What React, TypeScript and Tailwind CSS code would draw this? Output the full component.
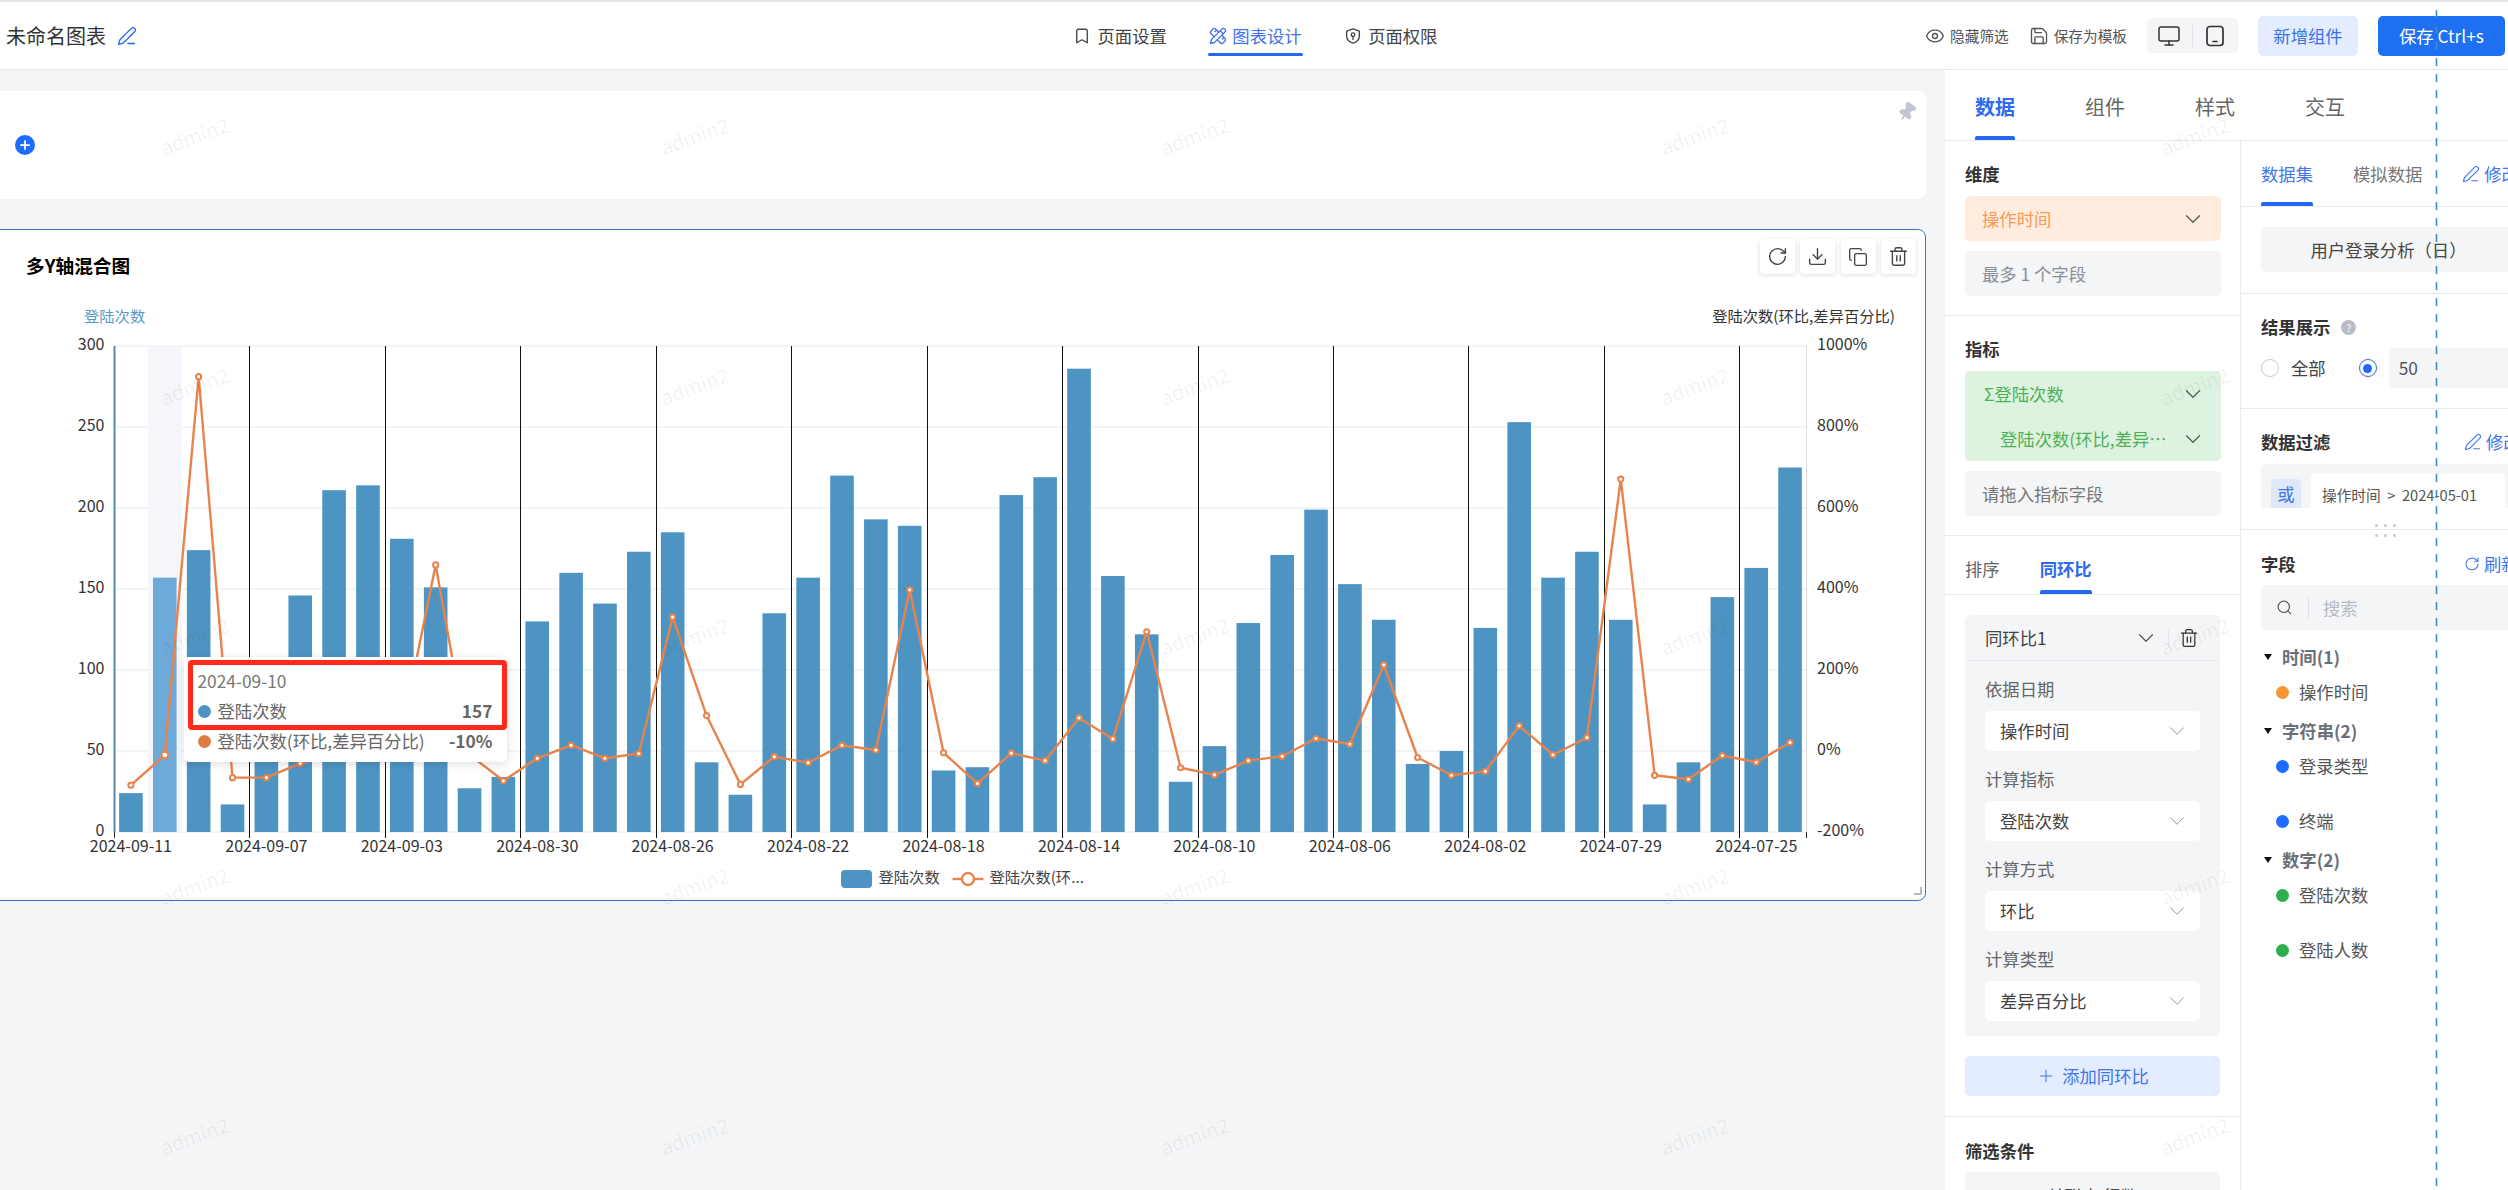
import React from "react";
import {
  Bookmark, PencilRuler, Eye, Save, Monitor, Plus, Pin,
  RotateCw, Download, Copy, Trash2, ChevronDown, PenLine, Search,
} from "lucide-react";

const BARS = [24,157,174,17,60,146,211,214,181,151,27,34,130,160,141,173,185,43,23,135,157,220,193,189,38,40,208,219,286,158,122,31,53,129,171,199,153,131,42,50,126,253,157,173,131,17,43,145,163,225];
const LINE_Z = [1227,1151,194,1208,1208,1172,1150,1120,1090,670,1150,1216,1159,1126,1159,1147,802,1051,1225,1155,1170,1126,1138,733,1145,1223,1146,1165,1057,1110,839,1183,1201,1165,1154,1109,1123,923,1157,1202,1192,1077,1150,1107,453,1202,1212,1152,1169,1119];
const X0 = 114;
const BAND = 33.86;
const TOP = 346;
const BOTTOM = 832;
const XL = ["2024-09-11","2024-09-07","2024-09-03","2024-08-30","2024-08-26","2024-08-22","2024-08-18","2024-08-14","2024-08-10","2024-08-06","2024-08-02","2024-07-29","2024-07-25"];
const cx = (i: number) => X0 + BAND * (i + 0.5);
const ly = (z: number) => 300 + z / 2.529;

function Chart() {
  const pts = LINE_Z.map((z, i) => `${cx(i)},${ly(z)}`).join(" ");
  return (
    <svg width="1926" height="600" viewBox="0 300 1926 600" className="block">
      {[0, 1, 2, 3, 4, 5, 6].map((i) => (
        <line key={i} x1={X0} x2={1807} y1={TOP + 81 * i} y2={TOP + 81 * i} stroke="#eff0f3" strokeWidth="1.5" />
      ))}
      <rect x={X0 + BAND} y={TOP} width={BAND} height={BOTTOM - TOP} fill="#f4f6fb" />
      {BARS.map((v, i) => {
        const h = (v * (BOTTOM - TOP)) / 300;
        return <rect key={i} x={cx(i) - 11.8} y={BOTTOM - h} width={23.6} height={h} fill={i === 1 ? "#6eaad9" : "#4e94c3"} />;
      })}
      {Array.from({ length: 13 }).map((_, k) => {
        if (k === 0) return null;
        const x = Math.round(X0 + BAND * 4 * k) + 0.5;
        return <line key={k} x1={x} x2={x} y1={TOP} y2={838} stroke="#111" strokeWidth="1" />;
      })}
      <line x1={114.5} x2={114.5} y1={TOP} y2={BOTTOM} stroke="#5a89a8" strokeWidth="2" />
      <line x1={114.5} x2={114.5} y1={BOTTOM} y2={838} stroke="#222" strokeWidth="1" />
      <line x1={1806.5} x2={1806.5} y1={TOP} y2={BOTTOM} stroke="#d8dade" strokeWidth="1" />
      <line x1={1806.5} x2={1806.5} y1={BOTTOM} y2={838} stroke="#222" strokeWidth="1" />
      <polyline points={pts} fill="none" stroke="#e8834c" strokeWidth="2.4" strokeLinejoin="round" />
      {LINE_Z.map((z, i) => (
        <circle key={i} cx={cx(i)} cy={ly(z)} r={i === 1 ? 3.4 : 2.6} fill="#fff" stroke="#e8834c" strokeWidth="2" />
      ))}
      <g fontSize="16" fill="#333">
        {["300","250","200","150","100","50","0"].map((t, i) => (
          <text key={t} x="104.5" y={TOP + 81 * i} textAnchor="end" dominantBaseline="middle">{t}</text>
        ))}
        {["1000%","800%","600%","400%","200%","0%","-200%"].map((t, i) => (
          <text key={t} x="1817" y={TOP + 81 * i} dominantBaseline="middle">{t}</text>
        ))}
        {XL.map((t, k) => (
          <text key={t} x={cx(k * 4)} y="848" textAnchor="middle" dominantBaseline="middle">{t}</text>
        ))}
      </g>
      <text x="84" y="318" fontSize="15.3" fill="#5a9bc6" dominantBaseline="middle">登陆次数</text>
      <text x="1895" y="318" fontSize="15.3" fill="#333" textAnchor="end" dominantBaseline="middle">登陆次数(环比,差异百分比)</text>
      <rect x="841" y="870" width="31" height="18" rx="4" fill="#4e94c3" />
      <text x="878.5" y="879" fontSize="15.3" fill="#444" dominantBaseline="middle">登陆次数</text>
      <line x1="952.5" x2="983.5" y1="879" y2="879" stroke="#e8834c" strokeWidth="2.4" />
      <circle cx="968" cy="879" r="6" fill="#fff" stroke="#e8834c" strokeWidth="2.4" />
      <text x="989.5" y="879" fontSize="15.3" fill="#444" dominantBaseline="middle">登陆次数(环...</text>
    </svg>
  );
}

function Tooltip() {
  return (
    <div className="absolute left-[183.5px] top-[357px] w-[323px] h-[105px] bg-white rounded-[5px] shadow-[0_2px_8px_rgba(0,0,0,0.14)] pl-[14px] pr-[14px] pt-[12px] text-[17.33px] leading-[24px] text-[#666]">
      <div className="text-[#777]">2024-09-10</div>
      <div className="flex items-center mt-[6px]">
        <span className="w-[13px] h-[13px] rounded-full bg-[#4e94c3] mr-[7px]" />
        <span>登陆次数</span>
        <span className="ml-auto font-bold">157</span>
      </div>
      <div className="flex items-center mt-[6px]">
        <span className="w-[13px] h-[13px] rounded-full bg-[#e07b48] mr-[7px]" />
        <span className="whitespace-nowrap">登陆次数(环比,差异百分比)</span>
        <span className="ml-auto font-bold">-10%</span>
      </div>
      <div className="absolute left-[4.5px] top-[3px] right-0 h-[70px] border-[5px] border-[#ff2a1a] rounded-[4px]" />
    </div>
  );
}

function ActionBtn({ children }: { children: React.ReactNode }) {
  return (
    <div className="w-[35px] h-[35px] flex items-center justify-center bg-white rounded-[4px] shadow-[0_1px_5px_rgba(0,0,0,0.13)] text-[#444]">
      {children}
    </div>
  );
}

function ShieldKey() {
  return (
    <svg width="18" height="18" viewBox="0 0 24 24" fill="none" stroke="currentColor" strokeWidth="1.8" strokeLinecap="round" strokeLinejoin="round">
      <path d="M12 2.5 3.5 5.5V12c0 4.8 3.6 8 8.5 9.5 4.9-1.5 8.5-4.7 8.5-9.5V5.5z" />
      <circle cx="12" cy="10.3" r="2.4" />
      <path d="M12 12.7V16.5" />
    </svg>
  );
}

function TabletIcon() {
  return (
    <svg width="22" height="22" viewBox="0 0 22 22" fill="none" stroke="currentColor" strokeWidth="1.7" strokeLinecap="round">
      <rect x="3" y="1.5" width="16" height="19" rx="3" />
      <path d="M9 16.5h4" />
    </svg>
  );
}

function Header() {
  return (
    <div className="flex h-[70px] border-t-2 border-b border-t-[#e3e4e7] border-b-[#e8eaee] bg-white shrink-0">
      <div className="w-[1073px] pl-[6px] pt-[20px] flex items-start text-[20px] leading-[28px] text-[#333]">
        <span>未命名图表</span>
        <PenLine size={20} strokeWidth={1.6} className="ml-[11px] mt-[4px] text-[#2468f2]" />
      </div>
      <div className="flex gap-[41px] text-[17.33px] leading-[24px] text-[#444]">
        <div className="flex flex-col pt-[22px]">
          <div className="flex items-center gap-[6.5px]"><Bookmark size={18} strokeWidth={1.8} /><span>页面设置</span></div>
        </div>
        <div className="flex flex-col pt-[22px] text-[#3f74ea]">
          <div className="flex items-center gap-[5px] px-[1.5px]"><PencilRuler size={18} strokeWidth={1.8} /><span>图表设计</span></div>
          <div className="mt-[5px] h-[3px] rounded-[2px] bg-[#2468f2]" />
        </div>
        <div className="flex flex-col pt-[22px]">
          <div className="flex items-center gap-[6px]"><ShieldKey /><span>页面权限</span></div>
        </div>
      </div>
      <div className="ml-auto pr-[3px] flex items-start pt-[14px] text-[14.67px] text-[#555]">
        <div className="flex items-center h-[40px] gap-[5px]"><Eye size={20} strokeWidth={1.6} /><span>隐藏筛选</span></div>
        <div className="flex items-center h-[40px] gap-[4.5px] ml-[20.5px]"><Save size={20} strokeWidth={1.6} /><span>保存为模板</span></div>
        <div className="ml-[20px] mt-[2px] w-[91px] h-[35px] rounded-[5px] bg-[#f4f5f7] flex items-center justify-between pl-[10px] pr-[12px] text-[#333]">
          <Monitor size={24} strokeWidth={1.5} />
          <span className="w-px h-[22px] bg-[#dfe1e6]" />
          <TabletIcon />
        </div>
        <div className="ml-[20px] w-[100px] h-[40px] rounded-[5px] bg-[#e3edff] text-[#3b72e8] text-[17.33px] flex items-center justify-center">新增组件</div>
        <div className="ml-[20px] w-[127px] h-[40px] rounded-[5px] bg-[#1f6ff2] text-white text-[17.33px] flex items-center justify-center">保存 Ctrl+s</div>
      </div>
    </div>
  );
}

function Canvas() {
  return (
    <div className="w-[1945px] shrink-0 bg-[#f4f5f7] pt-[21px] pr-[19px] overflow-hidden">
      <div className="relative h-[108px] -ml-[20px] bg-white rounded-[8px] flex items-center pl-[35px]">
        <span className="w-[20px] h-[20px] rounded-full bg-[#1f6bff] flex items-center justify-center text-white">
          <Plus size={14} strokeWidth={3} />
        </span>
        <Pin size={20} fill="#c2c6d2" className="absolute right-[9px] top-[11px] rotate-[35deg] text-[#c2c6d2]" />
      </div>
      <div className="relative mt-[30px] -ml-[10px] h-[672px] bg-white rounded-[8px] border border-[#3a78c4]">
        <div className="flex justify-between h-[70px]">
          <div className="pl-[35px] mt-[22px] h-[26px] text-[18.67px] leading-[26px] font-bold text-black">多Y轴混合图</div>
          <div className="flex gap-[5.5px] pr-[9px] pt-[9px] items-start">
            <ActionBtn><RotateCw size={21} strokeWidth={1.6} /></ActionBtn>
            <ActionBtn><Download size={21} strokeWidth={1.6} /></ActionBtn>
            <ActionBtn><Copy size={20} strokeWidth={1.6} /></ActionBtn>
            <ActionBtn><Trash2 size={21} strokeWidth={1.6} /></ActionBtn>
          </div>
        </div>
        <div className="relative ml-[9px]">
          <Chart />
          <Tooltip />
        </div>
        <div className="absolute right-[3px] bottom-[5px] w-[8px] h-[8px] border-r-2 border-b-2 border-[#b5b8bf]" />
      </div>
    </div>
  );
}

function Label({ children }: { children: React.ReactNode }) {
  return <div className="text-[17.33px] leading-[24px] font-bold text-[#333] whitespace-nowrap">{children}</div>;
}

function CompareField({ label, value }: { label: string; value: string }) {
  return (
    <div className="mt-[16px]">
      <div className="text-[17.33px] leading-[24px] text-[#666]">{label}</div>
      <div className="mt-[10px] w-[215px] h-[40px] bg-white rounded-[5px] flex items-center justify-between pl-[15px] pr-[10px] text-[17.33px] text-[#444]">
        <span>{value}</span>
        <ChevronDown size={26} strokeWidth={0.8} className="text-[#888]" />
      </div>
    </div>
  );
}

function ColumnA() {
  return (
    <div className="w-[296px] shrink-0 border-r border-[#e8eaee] text-[17.33px]">
      <div className="pl-[20px] pr-[19px] pt-[21px] pb-[19px] border-b border-[#e8eaee]">
        <Label>维度</Label>
        <div className="mt-[10px] h-[45px] rounded-[5px] bg-[#ffecdf] text-[#f79a55] flex items-center justify-between pl-[17px] pr-[15px]">
          <span>操作时间</span><ChevronDown size={26} strokeWidth={1.1} className="text-[#555]" />
        </div>
        <div className="mt-[10px] h-[45px] rounded-[5px] bg-[#f4f5f7] text-[#8a8f98] flex items-center pl-[17px]">最多 1 个字段</div>
      </div>
      <div className="pl-[20px] pr-[19px] pt-[21px] pb-[19px] border-b border-[#e8eaee]">
        <Label>指标</Label>
        <div className="mt-[10px] h-[90px] rounded-[5px] bg-[#def3df] text-[#4cb05a]">
          <div className="h-[45px] flex items-center justify-between pl-[19px] pr-[15px]">
            <span>Σ登陆次数</span><ChevronDown size={26} strokeWidth={1.1} className="text-[#555]" />
          </div>
          <div className="h-[45px] flex items-center justify-between pl-[35px] pr-[15px]">
            <span>登陆次数(环比,差异…</span><ChevronDown size={26} strokeWidth={1.1} className="text-[#555]" />
          </div>
        </div>
        <div className="mt-[10px] h-[45px] rounded-[5px] bg-[#f4f5f7] text-[#777] flex items-center pl-[17px]">请拖入指标字段</div>
      </div>
      <div className="pl-[20px] flex gap-[40px] pt-[21px] border-b border-[#e8eaee]">
        <div className="text-[#666] leading-[24px]">排序</div>
        <div className="flex flex-col">
          <span className="leading-[24px] font-semibold text-[#2f6bec]">同环比</span>
          <span className="mt-[9px] h-[4px] rounded-t-[2px] bg-[#2468f2]" />
        </div>
      </div>
      <div className="pl-[20px] pr-[20px] pb-[20px] border-b border-[#e8eaee]">
        <div className="mt-[20px] w-[255px] rounded-[6px] bg-[#f4f5f7] pb-[15px]">
          <div className="h-[46px] border-b border-[#e8eaee] flex items-center pl-[20px] pr-[21px] text-[#444]">
            <span>同环比1</span>
            <ChevronDown size={26} strokeWidth={1.1} className="ml-auto text-[#555]" />
            <span className="w-px h-[20px] bg-[#e6e8ec] ml-[9px] mr-[10px]" />
            <Trash2 size={20} strokeWidth={1.5} className="text-[#333]" />
          </div>
          <div className="pl-[20px]">
            <CompareField label="依据日期" value="操作时间" />
            <CompareField label="计算指标" value="登陆次数" />
            <CompareField label="计算方式" value="环比" />
            <CompareField label="计算类型" value="差异百分比" />
          </div>
        </div>
        <div className="mt-[20px] w-[255px] h-[40px] rounded-[5px] bg-[#e3edff] text-[#3f74ea] flex items-center justify-center gap-[6px]">
          <Plus size={20} strokeWidth={1.2} /><span>添加同环比</span>
        </div>
      </div>
      <div className="pl-[20px] pr-[20px] pt-[22px]">
        <Label>筛选条件</Label>
        <div className="mt-[9px] w-[255px] h-[60px] rounded-[6px] bg-[#f4f5f7] text-center text-[#444] pt-[12px] leading-[24px]">关联表 行数</div>
      </div>
    </div>
  );
}

function EditLink({ icon, text }: { icon: React.ReactNode; text: string }) {
  return (
    <span className="flex items-center gap-[4px] text-[#3f74ea] whitespace-nowrap font-normal leading-[24px]">{icon}<span>{text}</span></span>
  );
}

function Group({ text }: { text: string }) {
  return (
    <div className="flex items-center h-[24px] mt-[15px] font-semibold text-[#6b7078]">
      <svg width="8" height="6" viewBox="0 0 8 6" className="ml-[3px] mr-[10px]"><path d="M0 0h8L4 6z" fill="#111" /></svg>
      <span>{text}</span>
    </div>
  );
}

function Field({ color, text, top }: { color: string; text: string; top: string }) {
  return (
    <div className={`flex items-center h-[24px] pl-[15px] text-[#555] ${top}`}>
      <span className="w-[13px] h-[13px] rounded-full mr-[10px]" style={{ background: color }} />
      <span>{text}</span>
    </div>
  );
}

function ColumnB() {
  const pen = <PenLine size={18} strokeWidth={1.5} className="shrink-0" />;
  return (
    <div className="relative w-[295px] shrink-0 text-[17.33px]">
      <div className="pl-[20px] flex gap-[40px] pt-[21px] border-b border-[#e8eaee] whitespace-nowrap">
        <div className="flex flex-col">
          <span className="leading-[24px] text-[#3f74ea]">数据集</span>
          <span className="mt-[16px] h-[4px] rounded-t-[2px] bg-[#2468f2]" />
        </div>
        <span className="leading-[24px] text-[#777]">模拟数据</span>
        <div className="h-[24px]"><EditLink icon={pen} text="修改" /></div>
      </div>
      <div className="pl-[20px] pt-[20px] pb-[21px] border-b border-[#e8eaee]">
        <div className="h-[45px] w-[255px] rounded-[5px] bg-[#f4f5f7] flex items-center justify-center text-[#444] whitespace-nowrap">用户登录分析（日）</div>
      </div>
      <div className="pl-[20px] pt-[21px] pb-[20px] border-b border-[#e8eaee]">
        <div className="flex items-center">
          <Label>结果展示</Label>
          <span className="ml-[11px] w-[15px] h-[15px] rounded-full bg-[#b8bcc8] text-white text-[10px] flex items-center justify-center">?</span>
        </div>
        <div className="mt-[9px] flex items-center h-[40px]">
          <span className="shrink-0 w-[18px] h-[18px] rounded-full border border-[#c4c7cf] bg-white" />
          <span className="ml-[12px] text-[#444] whitespace-nowrap">全部</span>
          <span className="shrink-0 ml-[33px] w-[18px] h-[18px] rounded-full border border-[#2468f2] flex items-center justify-center">
            <span className="w-[9px] h-[9px] rounded-full bg-[#2468f2]" />
          </span>
          <div className="shrink-0 ml-[12px] w-[150px] h-[40px] rounded-[5px] bg-[#f4f5f7] pl-[10px] flex items-center text-[#555]">50</div>
        </div>
      </div>
      <div className="pl-[20px] pt-[21px] pb-[21px] border-b border-[#e8eaee]">
        <div className="flex items-center justify-between w-[247px]">
          <Label>数据过滤</Label>
          <div className="w-[44px]"><EditLink icon={pen} text="修改" /></div>
        </div>
        <div className="mt-[10px] h-[44px] w-[275px] rounded-t-[5px] bg-[#f4f5f7] flex items-end pl-[10px] overflow-hidden">
          <div className="w-[30px] h-[29px] rounded-t-[4px] bg-[#dfe9fb] text-[#3f74ea] flex items-center justify-center">或</div>
          <div className="ml-[10px] w-[194px] h-[34px] bg-white rounded-t-[4px] pl-[11px] pt-[9px] text-[14.67px] leading-[24px] text-[#555] whitespace-nowrap">操作时间&nbsp;&nbsp;&gt;&nbsp;&nbsp;2024-05-01</div>
        </div>
      </div>
      <div className="pl-[20px] pt-[22px]">
        <div className="flex items-center justify-between w-[247px]">
          <Label>字段</Label>
          <div className="w-[44px]"><EditLink icon={<RotateCw size={16} strokeWidth={1.6} className="shrink-0" />} text="刷新" /></div>
        </div>
        <div className="mt-[9px] h-[45px] w-[275px] rounded-[5px] bg-[#f4f5f7] flex items-center pl-[15px] text-[#b5b9c3]">
          <Search size={17} strokeWidth={1.6} className="text-[#555]" />
          <span className="ml-[15px] w-px h-[20px] bg-[#dfe1e6]" />
          <span className="ml-[14px]">搜索</span>
        </div>
        <Group text="时间(1)" />
        <Field color="#f79537" text="操作时间" top="mt-[11px]" />
        <Group text="字符串(2)" />
        <Field color="#1f6bff" text="登录类型" top="mt-[11px]" />
        <Field color="#1f6bff" text="终端" top="mt-[31px]" />
        <Group text="数字(2)" />
        <Field color="#2eaf4d" text="登陆次数" top="mt-[11px]" />
        <Field color="#2eaf4d" text="登陆人数" top="mt-[31px]" />
      </div>
      <div className="absolute left-[134px] top-[383px] grid grid-cols-3 gap-x-[6px] gap-y-[7px]">
        {[0, 1, 2, 3, 4, 5].map((i) => (
          <span key={i} className="w-[3px] h-[3px] rounded-full bg-[#c5c9d3]" />
        ))}
      </div>
    </div>
  );
}

function Panel() {
  return (
    <div className="w-[563px] shrink-0 bg-white overflow-hidden">
      <div className="h-[71px] pl-[30px] flex gap-[70px] border-b border-[#e8eaee] text-[20px] text-[#666]">
        <div className="flex flex-col pt-[23px]">
          <span className="leading-[28px] font-semibold text-[#2f6bec]">数据</span>
          <span className="mt-[15px] h-[4px] rounded-t-[2px] bg-[#2468f2]" />
        </div>
        <span className="pt-[23px] leading-[28px]">组件</span>
        <span className="pt-[23px] leading-[28px]">样式</span>
        <span className="pt-[23px] leading-[28px]">交互</span>
      </div>
      <div className="flex">
        <ColumnA />
        <ColumnB />
      </div>
    </div>
  );
}

export default function App() {
  const marks = Array.from({ length: 25 });
  return (
    <div className="relative w-[2508px] h-[1190px] overflow-hidden bg-white font-['Noto_Sans_CJK_SC','Noto_Sans',sans-serif]">
      <Header />
      <div className="flex h-[1120px]">
        <Canvas />
        <Panel />
      </div>
      <div className="absolute -left-[56px] top-[11px] grid grid-cols-[repeat(5,500px)] auto-rows-[250px] pointer-events-none">
        {marks.map((_, i) => (
          <div key={i} className="flex items-center justify-center">
            <span className="-rotate-[20deg] text-[20px] text-black/[0.06]">admin2</span>
          </div>
        ))}
      </div>
      <svg width="3" height="1190" className="absolute left-[2435px] top-0 pointer-events-none">
        <line x1="1.5" x2="1.5" y1="10" y2="1190" stroke="#3f8fc4" strokeWidth="1.6" strokeDasharray="8 8" />
      </svg>
    </div>
  );
}
